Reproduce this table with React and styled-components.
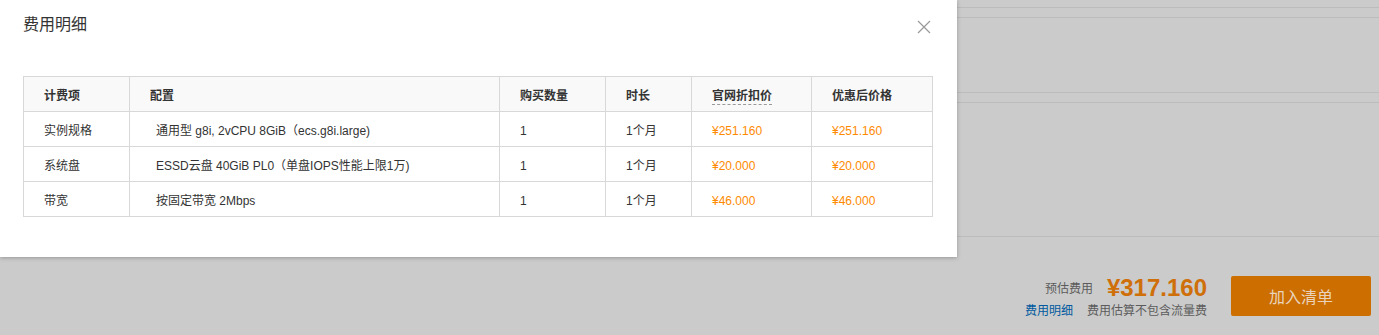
import styled, { createGlobalStyle } from 'styled-components'

const GlobalStyle = createGlobalStyle`
  body {
    margin: 0;
    font-family: "Liberation Sans", Arial, "Noto Sans CJK SC", sans-serif;
    font-size: 12px;
    color: #333;
  }
`

const Page = styled.div`
  position: relative;
  width: 1379px;
  height: 335px;
  overflow: hidden;
  background-color: #cbcbcb;
  display: flex;
  flex-direction: column;
`

const Rule = styled.div`
  height: 1px;
  background-color: #bcbcbc;
  margin-top: ${(p) => p.gap}px;
`

const Footer = styled.div`
  flex-grow: 1;
  display: flex;
  justify-content: flex-end;
  align-items: flex-start;
  padding: 39px 8px 0 0;
  gap: 24px;
`

const PriceBlock = styled.div`
  display: flex;
  flex-direction: column;
  align-items: flex-end;
  & .total-row {
    display: flex;
    align-items: center;
    gap: 14px;
    height: 24px;
  }
  & .label {
    color: #5c5c5c;
    font-size: 12px;
    line-height: 16px;
    margin-top: 2px;
  }
  & .amount {
    color: #cf6f0a;
    font-size: 24px;
    font-weight: 700;
    line-height: 24px;
  }
  & .note-row {
    display: flex;
    align-items: center;
    gap: 14px;
    margin-top: 3px;
    font-size: 12px;
    line-height: 16px;
  }
  & .link {
    color: #005aa0;
  }
  & .note {
    color: #5c5c5c;
  }
`

const AddButton = styled.button`
  width: 140px;
  height: 40px;
  border: none;
  border-radius: 2px;
  background-color: #cc6e00;
  color: #ead3bd;
  font-family: inherit;
  font-size: 16px;
`

const Modal = styled.div`
  position: absolute;
  top: 0;
  left: 0;
  width: 957px;
  height: 257px;
  background-color: #fff;
  box-shadow: 0 1px 4px rgba(0, 0, 0, 0.25);
  box-sizing: border-box;
  padding: 0 25px 0 23px;
`

const ModalHeader = styled.div`
  height: 50px;
  display: flex;
  align-items: center;
  justify-content: space-between;
  & h2 {
    margin: 0;
    font-size: 16px;
    font-weight: 400;
    line-height: 22px;
    color: #333;
  }
`

const CloseButton = styled.span`
  display: flex;
  color: #999;
  margin-right: 1px;
  margin-top: 4px;
`

const Table = styled.table`
  margin-top: 26px;
  width: 909px;
  border-collapse: collapse;
  table-layout: fixed;
  font-size: 12px;
`

const Th = styled.th`
  height: 31px;
  line-height: 16px;
  padding: 3px 0 0 20px;
  text-align: left;
  font-weight: 700;
  color: #333;
  background-color: #f9f9f9;
  border: 1px solid #d8d8d8;
`

const Td = styled.td`
  height: 31px;
  line-height: 16px;
  padding: 3px 0 0 ${(p) => (p.indent ? 26 : 20)}px;
  color: ${(p) => (p.price ? '#ff8a00' : '#333')};
  border: 1px solid #d8d8d8;
`

const Hint = styled.span`
  border-bottom: 1px dashed #999;
  padding-bottom: 1px;
`

const rows = [
  { name: '实例规格', config: '通用型 g8i, 2vCPU 8GiB（ecs.g8i.large)', qty: 1, period: '1个月', list: '¥251.160', final: '¥251.160' },
  { name: '系统盘', config: 'ESSD云盘 40GiB PL0（单盘IOPS性能上限1万)', qty: 1, period: '1个月', list: '¥20.000', final: '¥20.000' },
  { name: '带宽', config: '按固定带宽 2Mbps', qty: 1, period: '1个月', list: '¥46.000', final: '¥46.000' },
]

const App = () => {
  return (
    <Page>
      <GlobalStyle />
      <Rule gap={7} />
      <Rule gap={9} />
      <Rule gap={74} />
      <Rule gap={9} />
      <Rule gap={133} />
      <Footer>
        <PriceBlock>
          <div className='total-row'>
            <span className='label'>预估费用</span>
            <span className='amount'>¥317.160</span>
          </div>
          <div className='note-row'>
            <span className='link'>费用明细</span>
            <span className='note'>费用估算不包含流量费</span>
          </div>
        </PriceBlock>
        <AddButton>加入清单</AddButton>
      </Footer>

      <Modal>
        <ModalHeader>
          <h2>费用明细</h2>
          <CloseButton>
            <svg width='14' height='14' viewBox='0 0 14 14'>
              <path d='M1 1L13 13M13 1L1 13' stroke='currentColor' strokeWidth='1.2' fill='none' />
            </svg>
          </CloseButton>
        </ModalHeader>
        <Table>
          <colgroup>
            <col style={{ width: 106 }} />
            <col style={{ width: 370 }} />
            <col style={{ width: 106 }} />
            <col style={{ width: 86 }} />
            <col style={{ width: 120 }} />
            <col style={{ width: 121 }} />
          </colgroup>
          <thead>
            <tr>
              <Th>计费项</Th>
              <Th>配置</Th>
              <Th>购买数量</Th>
              <Th>时长</Th>
              <Th><Hint>官网折扣价</Hint></Th>
              <Th>优惠后价格</Th>
            </tr>
          </thead>
          <tbody>
            {rows.map((r) => (
              <tr key={r.name}>
                <Td>{r.name}</Td>
                <Td indent>{r.config}</Td>
                <Td>{r.qty}</Td>
                <Td>{r.period}</Td>
                <Td price>{r.list}</Td>
                <Td price>{r.final}</Td>
              </tr>
            ))}
          </tbody>
        </Table>
      </Modal>
    </Page>
  )
}

export default App
